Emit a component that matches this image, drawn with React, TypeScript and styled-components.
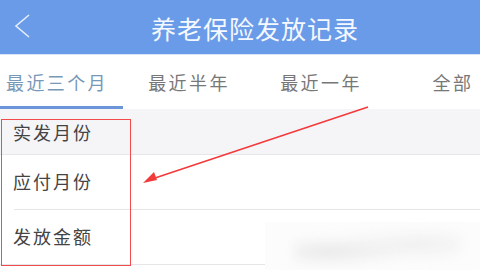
import React from "react";
import styled, { createGlobalStyle } from "styled-components";

const tabs = ["最近三个月", "最近半年", "最近一年", "全部"];
const rows = [
  { label: "实发月份", head: true, inset: false },
  { label: "应付月份", head: false, inset: true },
  { label: "发放金额", head: false, inset: false },
];

export default function App() {
  return (
    <Page>
      <GlobalStyle />
      <Header>
        <Back viewBox="0 0 20 26">
          <polyline points="15,2 2,13 15,24" />
        </Back>
        <Title>养老保险发放记录</Title>
      </Header>
      <Tabs>
        {tabs.map((t, i) => (
          <Tab key={t} $active={i === 0}>
            {t}
          </Tab>
        ))}
      </Tabs>
      <List>
        {rows.map((r) => (
          <Row key={r.label} $head={r.head} $inset={r.inset}>
            {r.label}
          </Row>
        ))}
      </List>
      <Blur />
      <Frame />
      <Arrow viewBox="0 0 480 270">
        <line x1="368" y1="107" x2="152" y2="179" />
        <polygon points="143,183 154,172 157,180" />
      </Arrow>
    </Page>
  );
}

const GlobalStyle = createGlobalStyle`
  body {
    margin: 0;
    background: #fff;
    font-family: "Noto Sans CJK SC", "Noto Sans", sans-serif;
  }
`;

const Page = styled.div`
  position: relative;
  width: 480px;
  height: 270px;
  overflow: hidden;
  background: #fff;
`;

const Header = styled.header`
  height: 54px;
  background: #6a9be8;
  border-bottom: 1px solid #d9e6f8;
  display: flex;
  align-items: center;
  justify-content: center;
  position: relative;
  padding-left: 30px;
`;

const Back = styled.svg`
  position: absolute;
  left: 14px;
  top: 13px;
  width: 20px;
  height: 26px;
  fill: none;
  stroke: #e4edfb;
  stroke-width: 1.6;
`;

const Title = styled.h1`
  margin: 0;
  color: #f4f8ff;
  font-size: 25px;
  font-weight: 400;
  letter-spacing: 1px;
  margin-top: 1px;
`;

const Tabs = styled.nav`
  display: flex;
  height: 54px;
  margin-left: -9px;
  background: #fff;
`;

const Tab = styled.div<{ $active: boolean }>`
  flex: 0 0 132px;
  display: flex;
  align-items: center;
  justify-content: center;
  font-size: 18px;
  letter-spacing: 2.4px;
  color: ${(p) => (p.$active ? "#7898b8" : "#777")};
  border-bottom: 3px solid ${(p) => (p.$active ? "#6b95d8" : "transparent")};
  box-sizing: border-box;
  padding-top: 2px;
`;

const List = styled.div`
  display: flex;
  flex-direction: column;
`;

const Row = styled.div<{ $head: boolean; $inset: boolean }>`
  height: ${(p) => (p.$head ? "46px" : "55px")};
  display: flex;
  align-items: center;
  padding-left: 13px;
  font-size: 18px;
  letter-spacing: 2px;
  color: #444;
  background: ${(p) => (p.$head ? "#f5f5f8" : "#fff")};
  box-sizing: border-box;
  position: relative;
  padding-bottom: ${(p) => (p.$head ? "0" : "4px")};
  &::after {
    content: "";
    position: absolute;
    left: ${(p) => (p.$inset ? "14px" : "0")};
    right: 0;
    bottom: 0;
    height: 1px;
    background: #e6e6e9;
  }
`;

const Blur = styled.div`
  position: absolute;
  left: 265px;
  top: 222px;
  width: 215px;
  height: 48px;
  background: #fcfcfc;
  &::after {
    content: "";
    position: absolute;
    inset: 8px 20px 4px 30px;
    background: radial-gradient(ellipse at 20% 60%, #e6e6e6 0%, transparent 45%),
      radial-gradient(ellipse at 75% 40%, #eeeeee 0%, transparent 50%);
    filter: blur(6px);
  }
`;

const Frame = styled.div`
  position: absolute;
  left: 1px;
  top: 119px;
  width: 130px;
  height: 147px;
  border: 1.5px solid #f24b4b;
  box-sizing: border-box;
`;

const Arrow = styled.svg`
  position: absolute;
  left: 0;
  top: 0;
  width: 480px;
  height: 270px;
  line {
    stroke: #f23a3a;
    stroke-width: 1.5;
  }
  polygon {
    fill: #f23a3a;
  }
`;
